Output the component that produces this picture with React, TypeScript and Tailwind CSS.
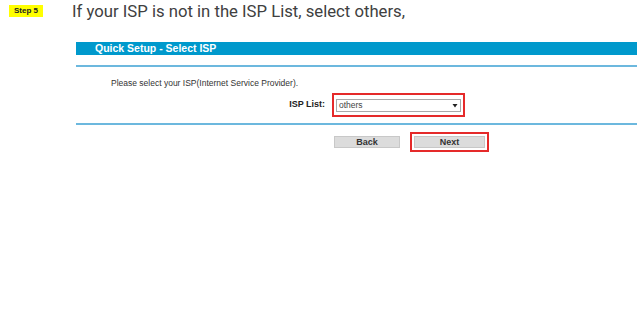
import React from "react";

export default function App() {
  return (
    <div className="w-[640px] h-[322px] bg-white overflow-hidden">
      <div className="flex items-start pt-[5px]">
        <div className="ml-[9px] w-[34px] h-[12px] bg-[#ffff00] flex items-center justify-center text-[8px] font-bold text-[#222] leading-none [font-family:'Liberation_Sans',sans-serif]">
          Step 5
        </div>
        <div className="ml-[29px] -mt-[3px] text-[16.7px] leading-[20px] text-[#404040] [font-family:Roboto,sans-serif]">
          If your ISP is not in the ISP List, select others,
        </div>
      </div>
      <div className="ml-[76px] w-[561px] mt-[20px] [font-family:'Liberation_Sans',Arial,sans-serif]">
        <div className="h-[13px] bg-[#0099cc] flex items-center pl-[19px] text-white text-[10.5px] font-bold leading-none">
          Quick Setup - Select ISP
        </div>
        <div className="mt-[10px] h-[2px] bg-[#6cb8de]" />
        <div className="pl-[35px] mt-[11px] text-[8.5px] leading-[10px] text-[#333]">
          Please select your ISP(Internet Service Provider).
        </div>
        <div className="flex items-center mt-[5px] h-[24px]">
          <div className="w-[249px] text-right text-[9px] font-bold text-[#222]">ISP List:</div>
          <div className="ml-[7px] w-[133px] h-[24px] border-2 border-[#e52a2a] flex items-center pl-[2px]">
            <div className="w-[125px] h-[13px] border border-[#a9a9a9] bg-white flex items-center justify-between px-[2px]">
              <span className="text-[8.5px] text-[#444] leading-none">others</span>
              <svg width="6" height="5" viewBox="0 0 6 5">
                <path d="M0.5 1 L5.5 1 L3 4.5 Z" fill="#222" />
              </svg>
            </div>
          </div>
        </div>
        <div className="mt-[6px] h-[2px] bg-[#6cb8de]" />
        <div className="flex items-center mt-[7px]">
          <div className="ml-[258px] w-[66px] h-[12px] bg-[#dcdcdc] border border-[#c8c8c8] flex items-center justify-center text-[9px] font-bold text-[#333] leading-none">
            Back
          </div>
          <div className="ml-[10px] w-[79px] h-[20px] border-2 border-[#e52a2a] flex items-center justify-center">
            <div className="w-[71px] h-[12px] bg-[#dcdcdc] border border-[#c8c8c8] flex items-center justify-center text-[9px] font-bold text-[#333] leading-none">
              Next
            </div>
          </div>
        </div>
      </div>
    </div>
  );
}
